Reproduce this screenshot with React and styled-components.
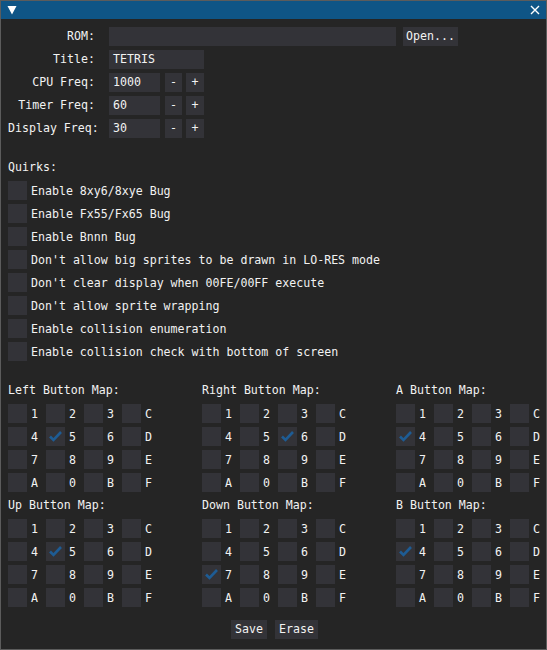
import React, { useState } from "react";
import styled, { createGlobalStyle } from "styled-components";

const GlobalStyle = createGlobalStyle`
  html, body {
    margin: 0;
    padding: 0;
    background: #252525;
  }
  * {
    box-sizing: border-box;
  }
`;

const Window = styled.div`
  width: 547px;
  height: 650px;
  border: 1px solid #5c5c5c;
  background: #252525;
  color: #f2f2f2;
  font-family: "DejaVu Sans Mono", "Liberation Mono", monospace;
  font-size: 11.6px;
  display: flex;
  flex-direction: column;
`;

const TitleBar = styled.div`
  height: 18px;
  background: #0f5586;
  display: flex;
  align-items: center;
  justify-content: space-between;
  padding: 0 6px 0 6px;
`;

const Body = styled.div`
  padding: 8px 7px;
  display: flex;
  flex-direction: column;
`;

const Row = styled.div`
  display: flex;
  align-items: center;
  height: 19px;
  margin-bottom: 4px;
`;

const Label = styled.div`
  width: 87px;
  margin-right: 14px;
  text-align: right;
  line-height: 19px;
  white-space: nowrap;
`;

const Input = styled.div`
  width: ${(p) => p.$w}px;
  height: 19px;
  line-height: 19px;
  background: #333338;
  padding: 0 4px;
  white-space: nowrap;
  overflow: hidden;
`;

const Button = styled.div`
  height: 19px;
  line-height: 19px;
  width: ${(p) => (p.$w ? `${p.$w}px` : "auto")};
  margin-left: ${(p) => p.$ml || 0}px;
  padding: ${(p) => (p.$w ? "0" : "0 4px")};
  background: #333338;
  text-align: center;
  white-space: nowrap;
  cursor: pointer;
`;

const SectionTitle = styled.div`
  height: 19px;
  line-height: 19px;
  margin-top: ${(p) => p.$mt || 0}px;
  margin-bottom: 4px;
`;

const CheckRow = styled.div`
  display: flex;
  align-items: center;
  height: 19px;
  margin-bottom: 4px;
  gap: 4px;
  white-space: nowrap;
`;

const Box = styled.div`
  width: 19px;
  height: 19px;
  background: #333338;
  flex: none;
  display: flex;
  align-items: center;
  justify-content: center;
`;

const MapsGrid = styled.div`
  display: grid;
  grid-template-columns: 194px 194px 151px;
  margin-top: 16px;
`;

const MapBlock = styled.div`
  display: flex;
  flex-direction: column;
`;

const KeyGrid = styled.div`
  display: grid;
  grid-template-columns: repeat(4, 38px);
  row-gap: 4px;
  margin-bottom: 4px;
`;

const KeyCell = styled.div`
  display: flex;
  align-items: center;
  gap: 4px;
  height: 19px;
`;

const Footer = styled.div`
  display: flex;
  justify-content: center;
  gap: 8px;
  margin-top: 9px;
  padding-left: 2px;
`;

const Check = () => (
  <svg width="19" height="19" viewBox="0 0 19 19">
    <polyline
      points="4,9.5 7.5,13 15,5"
      fill="none"
      stroke="#1e5c94"
      strokeWidth="2.6"
    />
  </svg>
);

const Checkbox = ({ checked }) => <Box>{checked && <Check />}</Box>;

const quirks = [
  "Enable 8xy6/8xye Bug",
  "Enable Fx55/Fx65 Bug",
  "Enable Bnnn Bug",
  "Don't allow big sprites to be drawn in LO-RES mode",
  "Don't clear display when 00FE/00FF execute",
  "Don't allow sprite wrapping",
  "Enable collision enumeration",
  "Enable collision check with bottom of screen",
];

const keys = ["1", "2", "3", "C", "4", "5", "6", "D", "7", "8", "9", "E", "A", "0", "B", "F"];

const maps = [
  { name: "Left", key: "5" },
  { name: "Right", key: "6" },
  { name: "A", key: "4" },
  { name: "Up", key: "5" },
  { name: "Down", key: "7" },
  { name: "B", key: "4" },
];

const Freq = ({ label, value }) => (
  <Row>
    <Label>{label}</Label>
    <Input $w={51}>{value}</Input>
    <Button $w={17} $ml={5}>-</Button>
    <Button $w={18} $ml={4}>+</Button>
  </Row>
);

export default function App() {
  const [title] = useState("TETRIS");

  return (
    <>
      <GlobalStyle />
      <Window>
        <TitleBar>
          <svg width="10" height="10" viewBox="0 0 10 10">
            <polygon points="0.5,1 9.5,1 5,9.5" fill="#fff" />
          </svg>
          <svg width="10" height="10" viewBox="0 0 10 10">
            <path d="M1 1 L9 9 M9 1 L1 9" stroke="#fff" strokeWidth="1.4" />
          </svg>
        </TitleBar>
        <Body>
          <Row>
            <Label>ROM:</Label>
            <Input $w={287} />
            <Button $w={55} $ml={7}>Open...</Button>
          </Row>
          <Row>
            <Label>Title:</Label>
            <Input $w={95}>{title}</Input>
          </Row>
          <Freq label="CPU Freq:" value="1000" />
          <Freq label="Timer Freq:" value="60" />
          <Freq label="Display Freq:" value="30" />

          <SectionTitle $mt={16}>Quirks:</SectionTitle>
          {quirks.map((q) => (
            <CheckRow key={q}>
              <Checkbox />
              {q}
            </CheckRow>
          ))}

          <MapsGrid>
            {maps.map((m) => (
              <MapBlock key={m.name}>
                <SectionTitle>{m.name} Button Map:</SectionTitle>
                <KeyGrid>
                  {keys.map((k) => (
                    <KeyCell key={k}>
                      <Checkbox checked={k === m.key} />
                      {k}
                    </KeyCell>
                  ))}
                </KeyGrid>
              </MapBlock>
            ))}
          </MapsGrid>

          <Footer>
            <Button>Save</Button>
            <Button>Erase</Button>
          </Footer>
        </Body>
      </Window>
    </>
  );
}
